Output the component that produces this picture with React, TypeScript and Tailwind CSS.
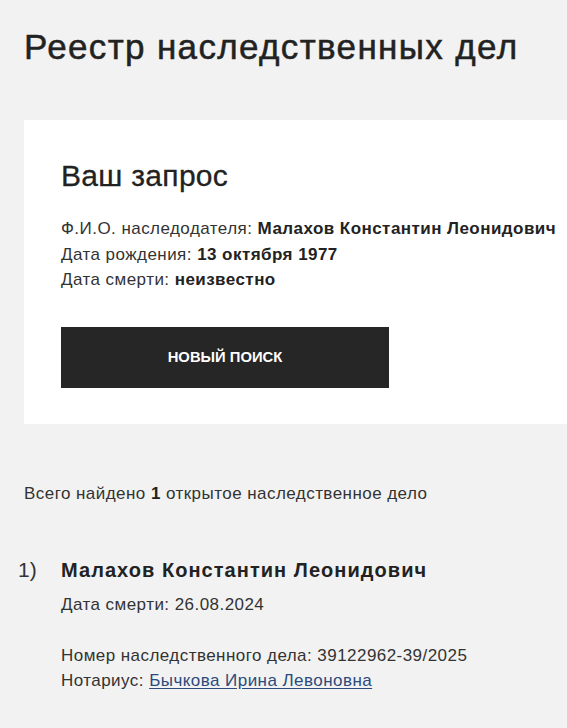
export default function App() {
  return (
    <div
      className="min-h-[728px] bg-[#f2f2f2] text-[#222] overflow-hidden"
      style={{ fontFamily: '"Liberation Sans", Arial, sans-serif' }}
    >
      <div className="pl-[24px]">
        <h1 className="pt-[26px] text-[35px] leading-[42px] tracking-[1.35px] text-[#222] [-webkit-text-stroke:0.5px_#222] whitespace-nowrap">
          Реестр наследственных дел
        </h1>
        <div className="mt-[52px] w-[560px] bg-white pl-[37px] pt-[38px] pb-[36px]">
          <h2 className="text-[30px] leading-[36px] tracking-[0.3px] text-[#222] [-webkit-text-stroke:0.3px_#222]">
            Ваш запрос
          </h2>
          <div className="mt-[22px] text-[17px] leading-[25.5px] tracking-[0.45px] text-[#333] whitespace-nowrap">
            <div>
              Ф.И.О. наследодателя: <b className="text-[#222]">Малахов Константин Леонидович</b>
            </div>
            <div>
              Дата рождения: <b className="text-[#222]">13 октября 1977</b>
            </div>
            <div>
              Дата смерти: <b className="text-[#222]">неизвестно</b>
            </div>
          </div>
          <button className="mt-[34px] flex h-[61px] w-[328px] items-center justify-center bg-[#262626] text-[14.8px] font-bold uppercase text-white">
            Новый поиск
          </button>
        </div>
        <div className="mt-[59px] text-[17px] leading-[22px] tracking-[0.45px] text-[#333]">
          Всего найдено <b className="text-[#222]">1</b> открытое наследственное дело
        </div>
        <div className="relative mt-[51px] pl-[37px]">
          <span className="absolute left-[-6px] top-0 text-[21px] leading-[28px] text-[#333]">1)</span>
          <div className="text-[20px] font-bold leading-[28px] tracking-[1.05px] text-[#222]">
            Малахов Константин Леонидович
          </div>
          <div className="mt-[10px] text-[17px] leading-[22px] tracking-[0.45px] text-[#333]">
            Дата смерти: 26.08.2024
          </div>
          <div className="mt-[27px] text-[17px] leading-[25px] tracking-[0.45px] text-[#333]">
            <div>Номер наследственного дела: 39122962-39/2025</div>
            <div>
              Нотариус:{" "}
              <a href="#" className="text-[#2c4a7c] underline underline-offset-[2px]">
                Бычкова Ирина Левоновна
              </a>
            </div>
          </div>
        </div>
      </div>
    </div>
  );
}
